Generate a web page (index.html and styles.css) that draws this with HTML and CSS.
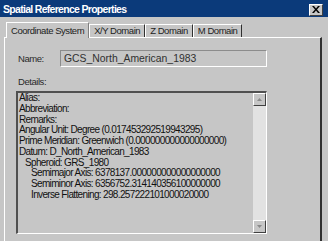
FILE: index.html
```html
<!DOCTYPE html>
<html lang="en">
<head>
    <meta charset="UTF-8">
    <title>Spatial Reference Properties</title>
    <link rel="stylesheet" href="styles.css">
</head>
<body>
    <div class="window">
        <div class="titlebar">
            <span class="title">Spatial Reference Properties</span>
            <button class="close-btn">
                <svg width="8" height="7" viewBox="0 0 8 7">
                    <path d="M0 0h2l2 2.5L6 0h2L5 3.5 8 7H6L4 4.5 2 7H0l3-3.5z" fill="#000"/>
                </svg>
            </button>
        </div>

        <div class="tabs">
            <div class="tab active">Coordinate System</div>
            <div class="tab">X/Y Domain</div>
            <div class="tab">Z Domain</div>
            <div class="tab">M Domain</div>
        </div>

        <div class="panel">
            <div class="name-row">
                <span class="label">Name:</span>
                <div class="name-field">GCS_North_American_1983</div>
            </div>
            <div class="label details-label">Details:</div>
            <div class="details-box">
                <div class="details-text">
                    <div>Alias:</div>
                    <div>Abbreviation:</div>
                    <div>Remarks:</div>
                    <div>Angular Unit: Degree (0.017453292519943295)</div>
                    <div>Prime Meridian: Greenwich (0.000000000000000000)</div>
                    <div>Datum: D_North_American_1983</div>
                    <div class="indent1">Spheroid: GRS_1980</div>
                    <div class="indent2">Semimajor Axis: 6378137.000000000000000000</div>
                    <div class="indent2">Semiminor Axis: 6356752.314140356100000000</div>
                    <div class="indent2">Inverse Flattening: 298.257222101000020000</div>
                </div>
                <div class="scrollbar">
                    <div class="scroll-btn">
                        <svg width="5" height="3" viewBox="0 0 5 3"><path d="M2.5 0L5 3H0z" fill="#8a8a8a"/></svg>
                    </div>
                    <div class="scroll-track"></div>
                    <div class="scroll-btn">
                        <svg width="5" height="3" viewBox="0 0 5 3"><path d="M0 0h5L2.5 3z" fill="#8a8a8a"/></svg>
                    </div>
                </div>
            </div>
        </div>
    </div>
</body>
</html>
```

FILE: styles.css
```css
body {
    margin: 0;
    background-color: #c6c6c6;
    font-family: "Liberation Sans", Arial, sans-serif;
    font-size: 9.5px;
    letter-spacing: -0.45px;
    color: #1a1a1a;
}

.window {
    width: 328px;
    height: 241px;
    display: flex;
    flex-direction: column;
    overflow: hidden;
}

.titlebar {
    height: 17px;
    flex-shrink: 0;
    background-color: #0b3a7a;
    display: flex;
    align-items: center;
    justify-content: space-between;
    padding: 0 5px 0 3px;
}

.title {
    color: #ffffff;
    font-weight: bold;
    font-size: 10.5px;
    letter-spacing: -0.7px;
}

.close-btn {
    width: 14px;
    height: 12px;
    margin-top: 2px;
    padding: 0;
    background-color: #c6c6c6;
    border: 1px solid;
    border-color: #ffffff #404040 #404040 #ffffff;
    display: flex;
    align-items: center;
    justify-content: center;
}

.tabs {
    display: flex;
    align-items: flex-end;
    margin: 5px 0 0 6px;
    height: 15px;
    flex-shrink: 0;
}

.tab {
    height: 12px;
    line-height: 11px;
    padding: 0 4px;
    border: 1px solid;
    border-color: #ffffff #303030 transparent #ffffff;
    border-bottom: none;
    color: #222;
}

.tab.active {
    height: 15px;
    line-height: 15px;
    padding: 0 4px;
    margin-bottom: -1px;
    background-color: #c6c6c6;
    position: relative;
    z-index: 1;
    border-right-color: #808080;
}

.panel {
    flex: 1;
    margin: 0 6px 0 4px;
    border-left: 1px solid #ffffff;
    border-top: 1px solid #ffffff;
    border-right: 2px solid #303030;
    padding: 12px 0 0 11px;
}

.name-row {
    display: flex;
    align-items: center;
    height: 17px;
}

.label {
    width: 42px;
    padding-left: 2px;
    color: #2a2a2a;
}

.name-field {
    width: 202px;
    height: 15px;
    line-height: 15px;
    padding-left: 3px;
    border: 1px solid;
    border-color: #8c8c8c #ffffff #ffffff #8c8c8c;
    font-size: 10.4px;
    letter-spacing: 0;
    color: #303030;
}

.details-label {
    height: 16px;
    line-height: 16px;
    margin: 7px 0 1px;
}

.details-box {
    width: 248px;
    height: 140px;
    border: 2px solid;
    border-color: #505050 #ffffff #ffffff #505050;
    border-width: 2px 1px 1px 2px;
    display: flex;
    overflow: hidden;
}

.details-text {
    flex: 1;
    min-width: 0;
    overflow: hidden;
    padding-left: 1px;
    font-size: 10px;
    letter-spacing: -0.65px;
    line-height: 10.75px;
    color: #111;
    white-space: nowrap;
}

.indent1 {
    padding-left: 6px;
}

.indent2 {
    padding-left: 12px;
}

.scrollbar {
    width: 13px;
    flex-shrink: 0;
    background-color: #e2e2e2;
    display: flex;
    flex-direction: column;
}

.scroll-btn {
    height: 11px;
    background-color: #c6c6c6;
    border: 1px solid;
    border-color: #ffffff #404040 #404040 #ffffff;
    display: flex;
    align-items: center;
    justify-content: center;
}

.scroll-track {
    flex: 1;
}
```
